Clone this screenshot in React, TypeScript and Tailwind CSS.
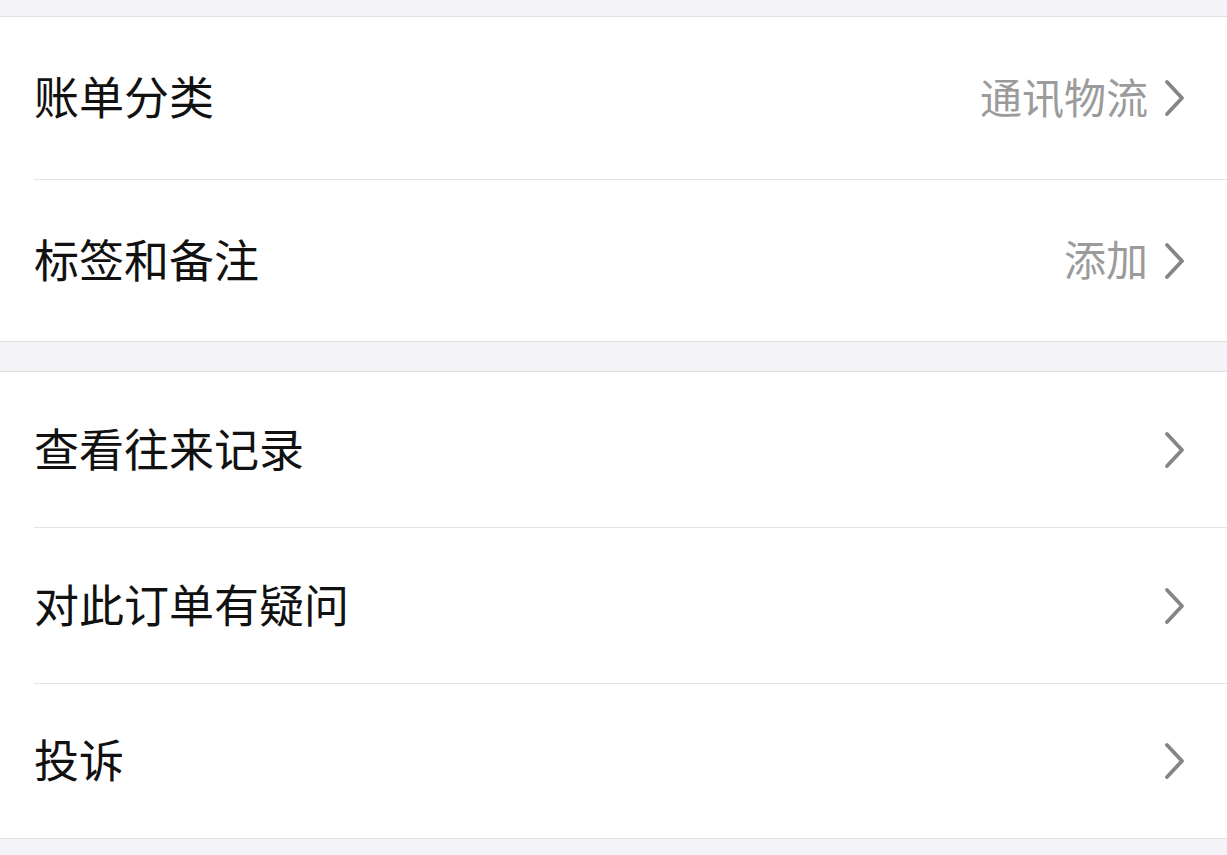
import { ReactNode } from 'react';

const Chevron = () => (
  <svg width="22" height="38" viewBox="0 0 22 38" fill="none" aria-hidden>
    <polyline
      points="4,3 19,19 4,35"
      stroke="#858589"
      strokeWidth="3.8"
      strokeLinecap="round"
      strokeLinejoin="round"
    />
  </svg>
);

const Row = ({ label, value, height }: { label: string; value?: string; height: string }) => (
  <div className={`flex items-center justify-between pl-[34px] pr-[42px] ${height}`}>
    <span className="mb-[5px] text-[45px] leading-none text-[#111111]">{label}</span>
    <div className="flex items-center gap-[15px]">
      {value && <span className="mb-[5px] text-[42px] leading-none text-[#9b9b9b]">{value}</span>}
      <Chevron />
    </div>
  </div>
);

const Divider = () => <div className="ml-[34px] h-px bg-[#e3e3e5]" />;

const Group = ({ children }: { children: ReactNode }) => (
  <div className="border-y border-[#e0e0e2] bg-white">{children}</div>
);

export default function App() {
  return (
    <div
      className="min-h-[855px] bg-[#f2f2f7]"
      style={{ fontFamily: '"Noto Sans CJK SC", "Noto Sans", sans-serif' }}
    >
      <div className="h-[16px]" />
      <Group>
        <Row label="账单分类" value="通讯物流" height="h-[162px]" />
        <Divider />
        <Row label="标签和备注" value="添加" height="h-[161px]" />
      </Group>
      <div className="h-[29px]" />
      <Group>
        <Row label="查看往来记录" height="h-[155px]" />
        <Divider />
        <Row label="对此订单有疑问" height="h-[155px]" />
        <Divider />
        <Row label="投诉" height="h-[154px]" />
      </Group>
    </div>
  );
}
